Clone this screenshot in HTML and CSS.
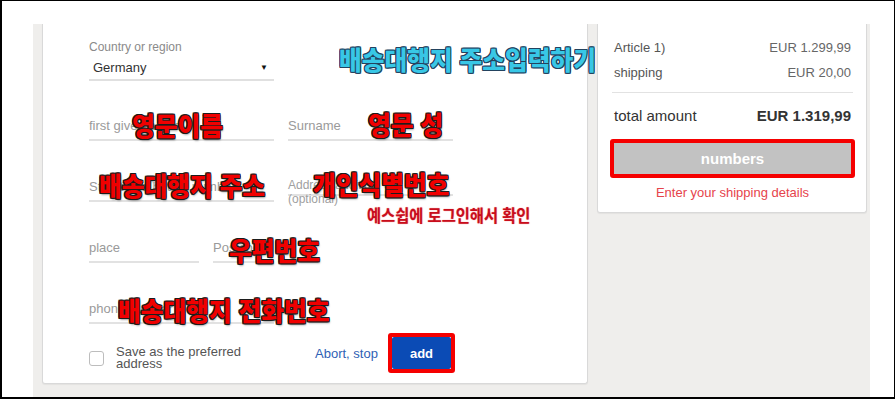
FILE: index.html
```html
<!DOCTYPE html>
<html lang="ko">
<head>
  <meta charset="UTF-8">
  <title>Shipping address</title>
  <link rel="stylesheet" href="styles.css">
</head>
<body>
  <div class="frame">
    <div class="panel">
      <div class="card form-card">
        <div class="country">
          <div class="country-label">Country or region</div>
          <div class="select">
            <span>Germany</span>
            <span class="caret">▼</span>
          </div>
        </div>

        <div class="field-row first">
          <div class="field w185">first given name</div>
          <div class="field w165">Surname</div>
        </div>
        <div class="field-row">
          <div class="field w185">Street and house number</div>
          <div class="field w165 extra">Address addition<br>(optional)</div>
        </div>
        <div class="field-row">
          <div class="field w110">place</div>
          <div class="field w61">Postcode</div>
        </div>
        <div class="field-row">
          <div class="field w185">phone number</div>
        </div>

        <div class="actions">
          <span class="checkbox"></span>
          <span class="save-label">Save as the preferred address</span>
          <a class="abort">Abort, stop</a>
          <span class="mark add-mark"><button class="add">add</button></span>
        </div>
      </div>

      <div class="card summary">
        <div class="line"><span>Article 1)</span><span class="amount">EUR 1.299,99</span></div>
        <div class="line"><span>shipping</span><span class="amount">EUR 20,00</span></div>
        <div class="divider"></div>
        <div class="total"><span>total amount</span><b>EUR 1.319,99</b></div>
        <div class="mark cta-mark"><button class="cta">numbers</button></div>
        <div class="hint">Enter your shipping details</div>
      </div>
    </div>
  </div>

  <!-- annotations drawn over the screenshot -->
  <div class="note cyan" style="left:339px;top:46px">배송대행지 주소입력하기</div>
  <div class="note" style="left:132px;top:112px">영문이름</div>
  <div class="note" style="left:368px;top:111px">영문 성</div>
  <div class="note" style="left:99px;top:172px">배송대행지 주소</div>
  <div class="note" style="left:313px;top:171px">개인식별번호</div>
  <div class="note small" style="left:367px;top:206px">예스쉽에 로그인해서 확인</div>
  <div class="note" style="left:229px;top:237px">우편번호</div>
  <div class="note" style="left:118px;top:297px">배송대행지 전화번호</div>
</body>
</html>
```

FILE: styles.css
```css
* { box-sizing: border-box; margin: 0; padding: 0; }
body {
  font-family: 'Liberation Sans', Arial, sans-serif;
  background: #fff;
}
.frame {
  width: 895px;
  height: 399px;
  border-style: solid;
  border-color: #000;
  border-width: 1px 1px 2px 2px;
  padding: 23px 0 0 31px;
  background: #fff;
  overflow: hidden;
}
.panel {
  width: 837px;
  height: 373px;
  background: #efeeec;
  display: flex;
  align-items: flex-start;
  gap: 9px;
  padding-left: 9px;
}
.card {
  background: #fff;
  border: 1px solid #d9d9d9;
  border-top: none;
  border-radius: 0 0 3px 3px;
  box-shadow: 0 1px 1px rgba(0,0,0,0.05);
}

/* address form */
.form-card {
  width: 546px;
  height: 360px;
  padding: 16px 0 0 46px;
}
.country { width: 185px; }
.country-label {
  font-size: 12px;
  line-height: 14px;
  color: #8a8a8a;
}
.select {
  display: flex;
  justify-content: space-between;
  align-items: center;
  padding: 5px 6px 2px 4px;
  font-size: 13px;
  line-height: 18px;
  color: #333;
  border-bottom: 2px solid #e0e0e0;
}
.caret { font-size: 8px; color: #111; }

.field-row {
  display: flex;
  align-items: flex-start;
  gap: 14px;
  margin-top: 37px;
}
.field-row.first { margin-top: 36px; }
.field {
  font-size: 13px;
  line-height: 18px;
  color: #9a9a9a;
  padding-bottom: 4px;
  border-bottom: 2px solid #e2e2e2;
  white-space: nowrap;
  overflow: visible;
}
.field.extra {
  height: 18px;
  font-size: 12px;
  line-height: 14px;
  padding-top: 0;
  color: #a0a0a0;
}
.w185 { width: 185px; }
.w165 { width: 165px; }
.w110 { width: 110px; }
.w61 { width: 61px; }

.actions {
  display: flex;
  align-items: flex-start;
  margin-top: 9px;
}
.checkbox {
  width: 15px;
  height: 15px;
  margin-top: 18px;
  border: 1px solid #bdbdbd;
  border-radius: 3px;
  background: #fff;
}
.save-label {
  width: 135px;
  margin: 13px 0 0 12px;
  font-size: 13px;
  line-height: 12px;
  color: #555;
}
.abort {
  width: 73px;
  margin: 13px 0 0 64px;
  font-size: 13px;
  line-height: 16px;
  color: #2f5fb5;
}
.mark {
  display: block;
  border: 4px solid #f50000;
  border-radius: 3px;
  background: #fff;
}
.add {
  display: block;
  width: 59px;
  height: 32px;
  border: none;
  border-radius: 2px;
  background: #0b4bb5;
  color: #fff;
  font-family: inherit;
  font-size: 13px;
  font-weight: bold;
}

/* order summary */
.summary {
  width: 270px;
  padding: 15px 15px 11px 16px;
}
.line {
  display: flex;
  justify-content: space-between;
  font-size: 13px;
  line-height: 18px;
  color: #555;
}
.line + .line { margin-top: 7px; }
.line .amount { color: #666; }
.divider {
  margin: 10px -2px 0;
  border-top: 1px solid #e2e2e2;
}
.total {
  display: flex;
  justify-content: space-between;
  margin-top: 13px;
  font-size: 15px;
  line-height: 20px;
  color: #333;
}
.cta-mark { margin: 13px -4px 0; }
.cta {
  display: block;
  width: 100%;
  height: 31px;
  border: none;
  background: #c2c2c2;
  color: #fff;
  font-family: inherit;
  font-size: 15px;
  font-weight: bold;
}
.hint {
  margin-top: 7px;
  text-align: center;
  font-size: 13px;
  line-height: 16px;
  color: #e6434b;
}

/* red / cyan callouts */
.note {
  position: absolute;
  font-family: 'Noto Sans CJK KR', sans-serif;
  font-weight: 900;
  font-size: 26px;
  line-height: 26px;
  white-space: nowrap;
  color: #f00000;
  transform: scaleX(0.95);
  transform-origin: 0 50%;
  text-shadow:
    -1px -1px 0 #1c1c1c, 1px -1px 0 #1c1c1c,
    -1px 1px 0 #1c1c1c, 1px 1px 0 #1c1c1c,
    0 -1px 0 #1c1c1c, 0 1px 0 #1c1c1c,
    -1px 0 0 #1c1c1c, 1px 0 0 #1c1c1c,
    1px 2px 2px rgba(0,0,0,0.35);
}
.note.cyan {
  color: #38c7e6;
  text-shadow:
    -1px -1px 0 #23435f, 1px -1px 0 #23435f,
    -1px 1px 0 #23435f, 1px 1px 0 #23435f,
    0 -1px 0 #23435f, 0 1px 0 #23435f,
    -1px 0 0 #23435f, 1px 0 0 #23435f;
}
.note.small {
  font-size: 17px;
  line-height: 18px;
  font-weight: 700;
  color: #c80d1c;
  transform: scaleX(0.9);
  text-shadow: 0 0 1px #f7a0a0, 0 0 1px #f7a0a0;
}
```
